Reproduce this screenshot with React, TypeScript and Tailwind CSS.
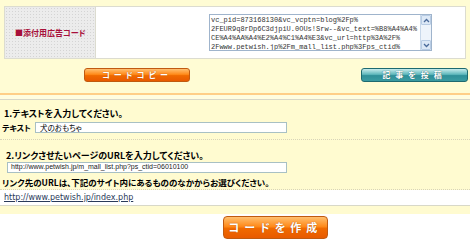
const jp = "font-['Noto_Sans_CJK_JP',sans-serif] [font-feature-settings:'palt']";

function OrangeButton({label, big}: {label: string; big?: boolean}) {
    return (
        <div
            className={`${big ? 'w-[105px] h-[23px] text-[11px] tracking-[5px] rounded-[4px]' : 'w-[106px] h-[14px] text-[8px] tracking-[4px] rounded-[3px]'} flex items-center justify-center border border-[#c05a10] bg-[linear-gradient(#ffc070,#ff8a1a_45%,#f06a00_55%,#e85a00)] text-white font-bold ${jp} [text-shadow:0_0_1px_#a04000]`}>
            {label}
        </div>
    );
}

function TealButton({label}: {label: string}) {
    return (
        <div
            className={`w-[107px] h-[14px] text-[8px] tracking-[5px] rounded-[3px] flex items-center justify-center border border-[#1d6a70] bg-[linear-gradient(#c8ecec,#5fb8bc_45%,#2f9098_55%,#3a9ca2)] text-white font-bold ${jp} [text-shadow:0_0_1px_#0c4448]`}>
            {label}
        </div>
    );
}

export default function App() {
    const code = [
        'vc_pid=873168130&vc_vcptn=blog%2Fp%',
        '2FEUR9q8rDp6C3djpiU.0OUs!Srw--&vc_text=%B8%A4%A4%',
        'CE%A4%AA%A4%E2%A4%C1%A4%E3&vc_url=http%3A%2F%',
        '2Fwww.petwish.jp%2Fm_mall_list.php%3Fps_ctid%',
    ];

    return (
        <div className="w-[470px] h-[242px] overflow-hidden bg-white">
            {/* 広告コード */}
            <div className="bg-[#fffcd4] pt-[6px] px-[4px] h-[93px]">
                <div className="flex h-[53px] border border-[#dcdcd0] w-[462px]">
                    <div className="w-[91px] flex items-center pl-[10px] bg-[#ececec] bg-[image:radial-gradient(circle,#d4d4d4_0.8px,transparent_0.8px)] bg-[length:3px_3px] border-r border-[#dcdcd0]">
                        <span className={`text-[8px] font-bold text-[#a8103a] ${jp}`}>■添付用広告コード</span>
                    </div>
                    <div className="flex-1 bg-white flex items-center">
                        <div className="ml-[113px] w-[223px] h-[37px] border border-[#9fb4cc] flex bg-white">
                            <div className="flex-1 pl-[1px] pt-[1px] overflow-hidden font-['Liberation_Mono',monospace] text-[7px] leading-[9px] text-[#333] whitespace-nowrap">
                                {code.map(line => <div key={line}>{line}</div>)}
                            </div>
                            <div className="w-[11px] flex flex-col justify-between bg-[#eef4fb] border-l border-[#c8d8ea]">
                                <div className="h-[10px] flex items-center justify-center bg-[#dce8f6] border border-[#b8cce4] rounded-[1px]">
                                    <svg width="7" height="5" viewBox="0 0 7 5"><path d="M1 4 L3.5 1.5 L6 4" stroke="#4a6a9a" strokeWidth="1.3" fill="none"/></svg>
                                </div>
                                <div className="h-[10px] flex items-center justify-center bg-[#dce8f6] border border-[#b8cce4] rounded-[1px]">
                                    <svg width="7" height="5" viewBox="0 0 7 5"><path d="M1 1 L3.5 3.5 L6 1" stroke="#4a6a9a" strokeWidth="1.3" fill="none"/></svg>
                                </div>
                            </div>
                        </div>
                    </div>
                </div>
                <div className="flex mt-[9px]">
                    <div className="ml-[80px]"><OrangeButton label="コードコピー"/></div>
                    <div className="ml-[171px]"><TealButton label="記事を投稿"/></div>
                </div>
            </div>
            <div className="h-[2px] bg-[#ffcf88]"/>
            <div className="h-[4px] bg-[#fffde0]"/>
            <div className="h-[1px] bg-[#d8d8c8]"/>

            {/* 入力フォーム */}
            <div className={`bg-[#fffbd0] ${jp} text-black`}>
                <div className="h-[20px] pl-[4px] pt-[8px] text-[9px] font-bold leading-[11px]">1.テキストを入力してください。</div>
                <div className="flex items-center h-[14px] pt-[1px]">
                    <span className="w-[35px] pl-[2px] text-[8px] font-bold">テキスト</span>
                    <div className="w-[252px] h-[11px] border border-[#a8c0c4] bg-white flex items-center pl-[4px] text-[7.5px]">犬のおもちゃ</div>
                </div>
                <div className="h-[5px]"/>
                <div className="border-t border-dotted border-[#d8d4b8]"/>
                <div className="h-[22px] pl-[6px] pt-[10px] text-[9px] font-bold leading-[11px]">2.リンクさせたいページのURLを入力してください。</div>
                <div className="pl-[7px] h-[13px]">
                    <div className="w-[280px] h-[11px] border border-[#a8c0c4] bg-white flex items-center pl-[3px] text-[7px] font-['Liberation_Sans',sans-serif] text-[#222]">
                        http://www.petwish.jp/m_mall_list.php?ps_ctid=06010100
                    </div>
                </div>
                <div className="h-[14px] pl-[2px] text-[8.5px] font-bold leading-[15px]">リンク先のURLは、下記のサイト内にあるもののなかからお選びください。</div>
                <div className="border-t border-dotted border-[#d8d4b8]"/>
                <div className="h-[15px] bg-white flex items-center pl-[4px]">
                    <span className="font-['DejaVu_Sans',sans-serif] text-[8px] text-[#2a3a5a] underline">http://www.petwish.jp/index.php</span>
                </div>
                <div className="h-[1px] bg-[#d8d8c8]"/>
                <div className="h-[8px] bg-[#fffbd0]"/>
            </div>

            <div className="pt-[2px] pl-[223px]">
                <OrangeButton label="コードを作成" big/>
            </div>
        </div>
    );
}
